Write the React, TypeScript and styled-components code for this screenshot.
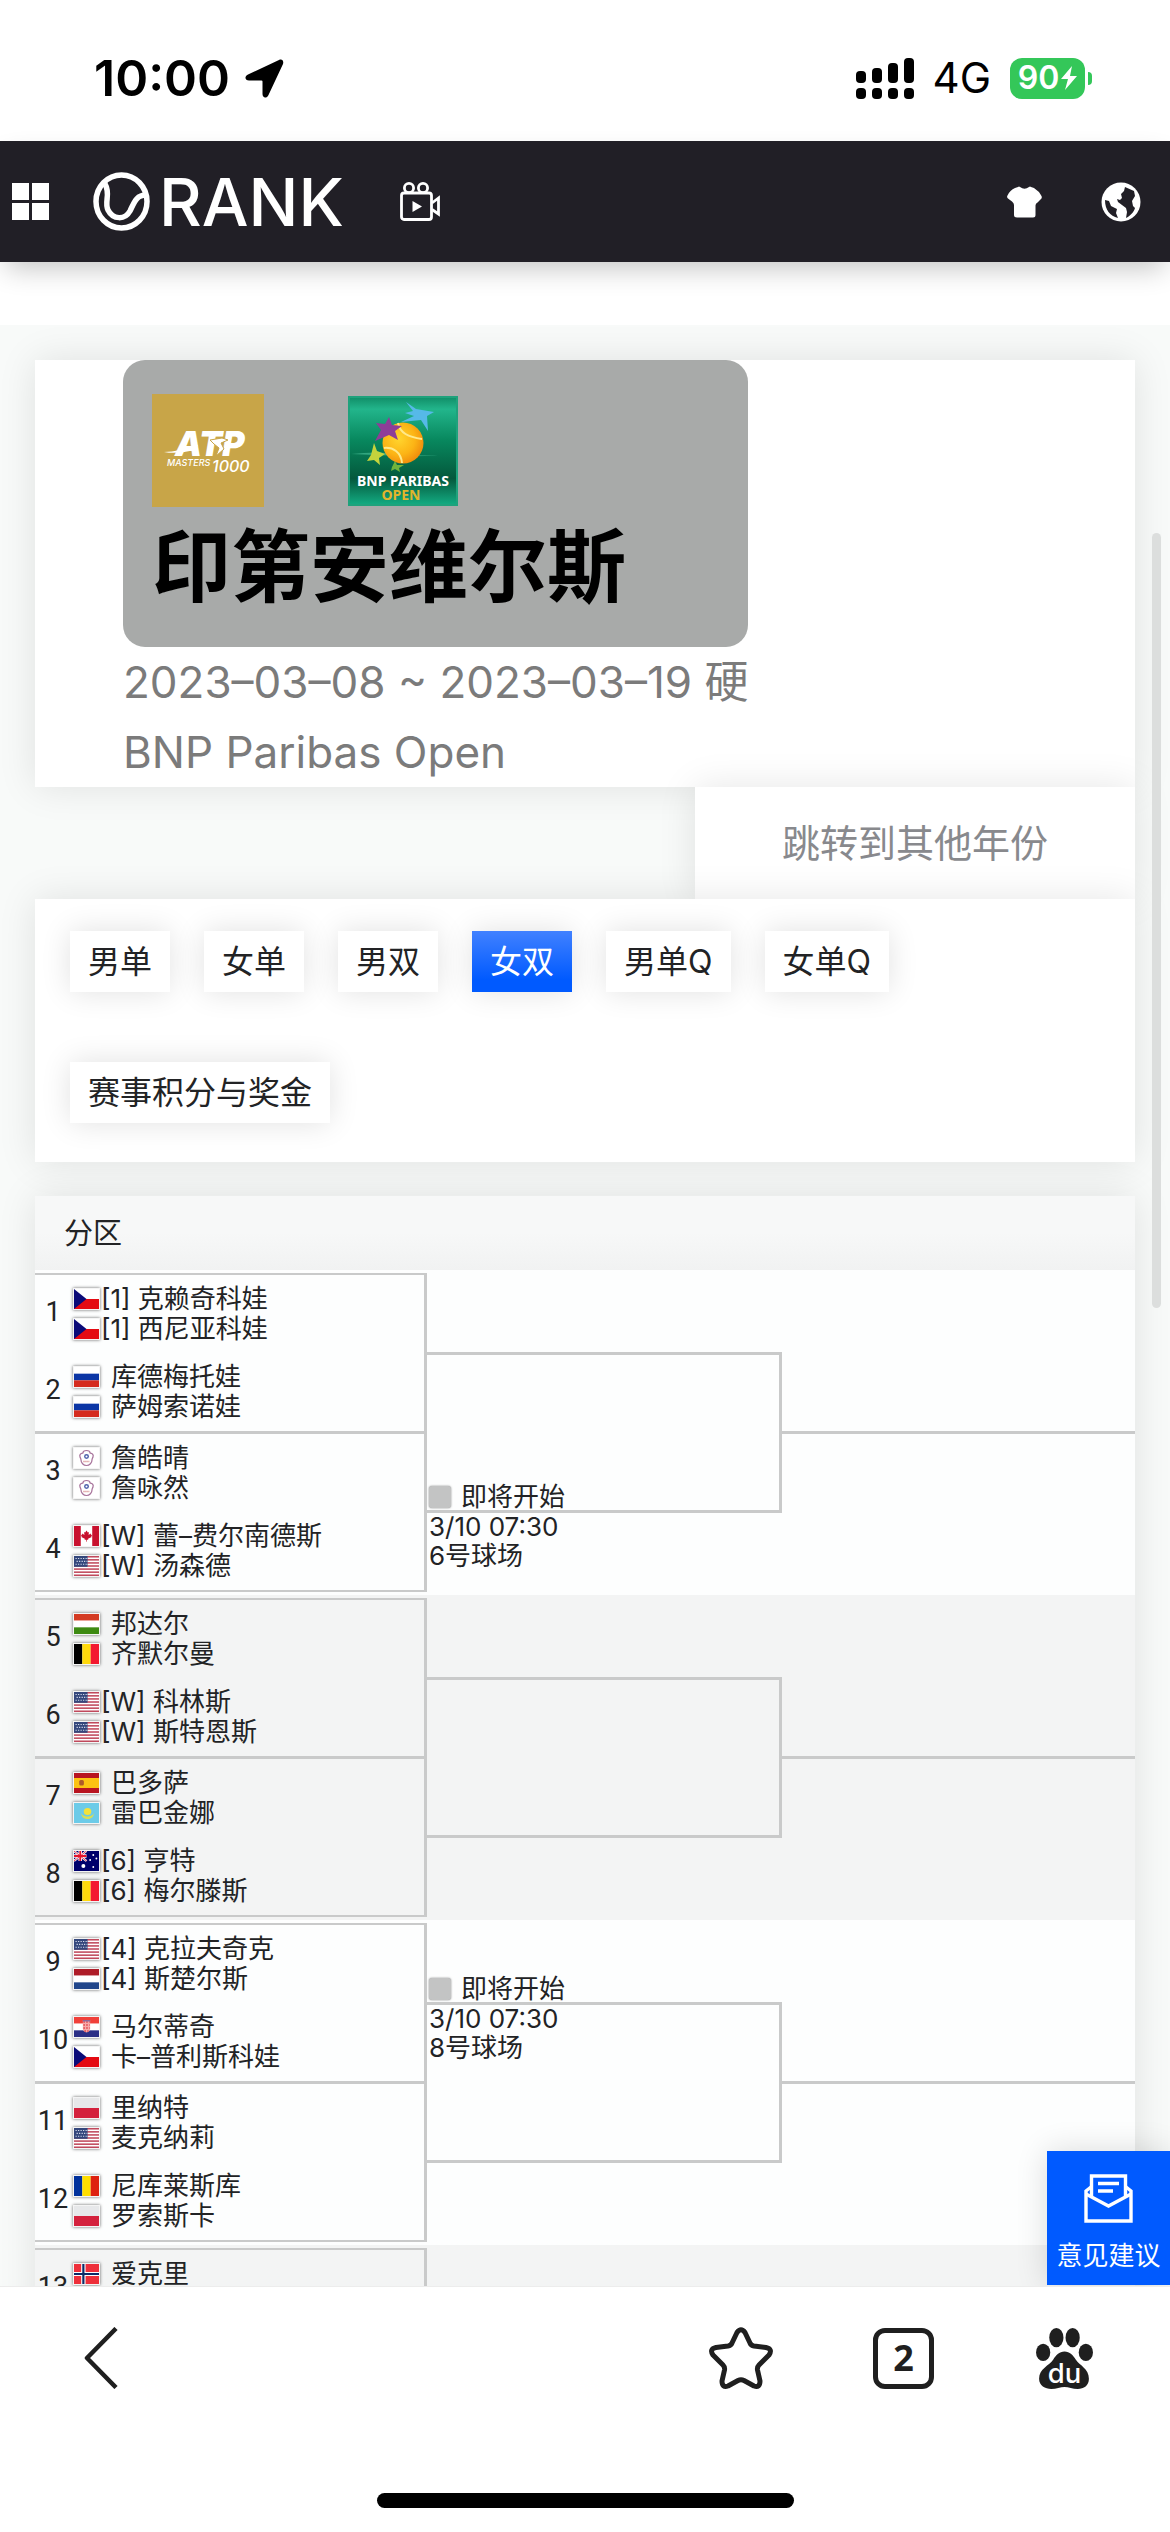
import React from "react";
import styled, { createGlobalStyle } from "styled-components";

const LINE = "#c9caca";
const BLUE = "#005aff";

const GlobalStyle = createGlobalStyle`
  * { box-sizing: border-box; }
  body {
    margin: 0;
    background: #fff;
    color: #222325;
    font-family: Inter, "Noto Sans CJK SC", sans-serif;
  }
  button {
    margin: 0;
    padding: 0;
    border: 0;
    background: none;
    color: inherit;
    font: inherit;
    cursor: pointer;
  }
  svg { display: block; flex: none; }
`;

const Screen = styled.div`
  height: 100vh;
  display: flex;
  flex-direction: column;
  overflow: hidden;
`;

const StatusBar = styled.div`
  flex: none;
  height: 141px;
  padding: 15px 78px 0 94px;
  display: flex;
  align-items: center;
  justify-content: space-between;
  color: #000;
`;

const StatusSide = styled.div<{ $gap: number }>`
  display: flex;
  align-items: center;
  gap: ${(p) => p.$gap}px;
`;

const Clock = styled.span`
  font-size: 50px;
  line-height: 60px;
  font-weight: 600;
`;

const Network = styled.span`
  font-size: 42px;
  line-height: 50px;
`;

const BatteryWrap = styled.div`
  display: flex;
  align-items: center;
  gap: 3px;
`;

const BatteryBody = styled.div`
  width: 75px;
  height: 41px;
  display: flex;
  align-items: center;
  justify-content: center;
  gap: 2px;
  border-radius: 12px;
  background: #34c759;
  color: #fff;
  font-size: 32px;
  line-height: 40px;
  font-weight: 600;
`;

const BatteryNub = styled.span`
  width: 4px;
  height: 13px;
  border-radius: 0 6px 6px 0;
  background: #34c759;
`;

const SiteHeader = styled.header`
  flex: none;
  position: relative;
  z-index: 2;
  height: 121px;
  padding: 0 29px 0 12px;
  display: flex;
  align-items: center;
  background: #211f26;
  color: #fff;
  box-shadow: 0 12px 26px -6px rgba(0, 0, 0, 0.24);
`;

const Brand = styled.a`
  margin: 0 56px 0 44px;
  display: flex;
  align-items: center;
  gap: 9px;
  color: #fff;
  text-decoration: none;
  font-size: 66px;
  line-height: 62px;
  font-weight: 500;
`;

const HeaderTools = styled.div`
  margin-left: auto;
  display: flex;
  align-items: center;
  gap: 59px;
`;

const Viewport = styled.div`
  flex: 1;
  min-height: 0;
  position: relative;
  overflow: hidden;
  background: #f8faf9;
`;

const Spacer = styled.div`
  height: 63px;
  background: #fff;
`;

const Page = styled.main`
  padding: 35px 35px 0;
`;

const Card = styled.section`
  background: #fff;
  box-shadow: 0 0 36px rgba(0, 0, 0, 0.1);
`;

const EventCard = styled(Card)`
  padding-left: 88px;
`;

const EventInfo = styled.div`
  width: fit-content;
  color: #7b7b7b;
  font-size: 44px;
  line-height: 70px;

  p { margin: 0; }
`;

const EventBanner = styled.div`
  padding: 34px 29px 19px;
  border-radius: 22px;
  background: #a8aaa9;

  h1 {
    margin: 0;
    color: #000;
    font-size: 79px;
    line-height: 121px;
    font-weight: 600;
  }
`;

const Logos = styled.div`
  display: flex;
  align-items: center;
  gap: 84px;
`;

const YearRow = styled.div`
  display: flex;
  justify-content: flex-end;
`;

const YearPicker = styled.button`
  width: 40%;
  height: 112px;
  background: #fff;
  box-shadow: 0 0 36px rgba(0, 0, 0, 0.1);
  color: #88898d;
  font-size: 38px;
  line-height: 56px;
`;

const TabsCard = styled(Card)`
  position: relative;
  padding: 32px 35px 39px;
  display: flex;
  flex-wrap: wrap;
  gap: 70px 34px;
`;

const Tab = styled.button<{ $active?: boolean }>`
  height: 61px;
  padding: 0 18px;
  background: ${(p) => (p.$active ? `linear-gradient(#4181ff, ${BLUE} 80%)` : "#fff")};
  color: ${(p) => (p.$active ? "#fff" : "#222325")};
  box-shadow: 0 0 30px rgba(0, 20, 20, 0.12);
  font-size: 32px;
  line-height: 58px;
`;

const DrawCard = styled(Card)`
  margin-top: 34px;
`;

const DrawTitle = styled.h2`
  margin: 0;
  height: 74px;
  padding: 0 29px;
  background: linear-gradient(#f7f8f8 50%, #f1f2f2);
  font-size: 29px;
  line-height: 76px;
  font-weight: 400;
`;

const Group = styled.div<{ $shaded: boolean }>`
  min-height: 325px;
  padding: 3px 0;
  display: grid;
  grid-template-columns: 392px 355px 1fr;
  background: ${(p) => (p.$shaded ? "#f3f4f4" : "#fdfefe")};
`;

const FirstRound = styled.div`
  border: solid ${LINE};
  border-width: 2px 3px 2px 0;
`;

const Match = styled.div`
  & + & { border-top: 3px solid ${LINE}; }
`;

const Entry = styled.div`
  height: 78px;
  display: flex;
`;

const DrawNo = styled.span`
  width: 36px;
  text-align: center;
  font-family: Roboto, sans-serif;
  font-size: 27px;
  line-height: 74px;
`;

const Team = styled.div`
  padding: 9px 0 0 2px;
`;

const Player = styled.div<{ $seeded: boolean }>`
  height: 30px;
  display: flex;
  align-items: center;
  gap: ${(p) => (p.$seeded ? 1 : 11)}px;
  font-size: 26px;
  line-height: 30px;
  white-space: pre;
`;

const SecondRound = styled.div`
  position: relative;
  align-self: center;
  height: 161px;
  border: solid ${LINE};
  border-width: 3px 3px 3px 0;
`;

const Schedule = styled.div<{ $line: "top" | "bottom" }>`
  position: absolute;
  left: 2px;
  ${(p) => (p.$line === "top" ? "top: -32px;" : "top: 126px;")}
  font-size: 26px;
  line-height: 29px;

  div:first-child {
    height: 31px;
    display: flex;
    align-items: center;
    gap: 10px;
  }
`;

const StateMark = styled.span`
  width: 22px;
  height: 22px;
  border-radius: 3px;
  background: #c3c4c4;
  box-shadow: 0 0 2px rgba(0, 0, 0, 0.5);
`;

const ThirdRound = styled.div`
  align-self: center;
  height: 3px;
  background: ${LINE};
`;

const ScrollThumb = styled.div`
  position: absolute;
  z-index: 3;
  right: 9px;
  top: 271px;
  width: 9px;
  height: 775px;
  border-radius: 5px;
  background: #dcdedd;
`;

const Feedback = styled.button`
  position: absolute;
  right: 0;
  bottom: 1px;
  width: 123px;
  height: 134px;
  padding-top: 23px;
  display: flex;
  flex-direction: column;
  align-items: center;
  gap: 14px;
  background: ${BLUE};
  box-shadow: 0 0 30px rgba(0, 0, 0, 0.14);
  color: #fff;
  font-size: 26px;
  line-height: 38px;
`;

const BottomArea = styled.footer`
  flex: none;
  height: 246px;
  padding: 0 75px 24px 84px;
  display: flex;
  flex-direction: column;
  justify-content: space-between;
  align-items: stretch;
  border-top: 1px solid #ececec;
  background: #fff;
  color: #1f1f1f;
`;

const BrowserBar = styled.nav`
  padding-top: 40px;
  display: flex;
  align-items: center;
  justify-content: space-between;
`;

const BrowserTools = styled.div`
  display: flex;
  align-items: center;
  gap: 100px;
`;

const TabCount = styled.button`
  && {
    width: 61px;
    height: 61px;
    border: 5px solid #1f1f1f;
    border-radius: 12px;
    font-family: "Noto Sans", sans-serif;
    font-size: 36px;
    line-height: 48px;
    font-weight: 700;
  }
`;

const HomeIndicator = styled.div`
  align-self: center;
  width: 417px;
  height: 15px;
  margin-right: 9px;
  border-radius: 8px;
  background: #000;
`;

type Code =
  | "CZE" | "RUS" | "TPE" | "CAN" | "USA" | "HUN" | "BEL" | "ESP"
  | "KAZ" | "AUS" | "NED" | "CRO" | "POL" | "ROU" | "NOR";

const bands = (colors: string[], vertical = false) => (
  <>
    {colors.map((c, i) =>
      vertical ? (
        <rect key={i} x={i * 8} width="8" height="20" fill={c} />
      ) : (
        <rect key={i} y={(i * 20) / colors.length} width="24" height={20 / colors.length} fill={c} />
      )
    )}
  </>
);

const flagArt: Record<Code, React.ReactNode> = {
  CZE: (
    <>
      {bands(["#fff", "#e40a12"])}
      <path d="M0 0L12 10L0 20z" fill="#0b0b78" />
    </>
  ),
  RUS: bands(["#fff", "#0b35a5", "#d52b1e"]),
  TPE: (
    <>
      <rect width="24" height="20" fill="#fff" />
      <path
        d="M12 2.500c2.400 0 3.400 1.200 3.600 2.700c2.200.2 3.400 1.800 2.600 3.800c-.4 1.400-.9 1.600-.9 2.800c0 3-2.300 5.700-5.300 5.700s-5.300-2.700-5.300-5.700c0-1.200-.5-1.400-.9-2.800c-.8-2 .4-3.600 2.600-3.800C8.600 3.700 9.600 2.500 12 2.500z"
        fill="none"
        stroke="#a8739b"
        strokeWidth="1.200"
      />
      <circle cx="12" cy="8.500" r="2.400" fill="#4f62ac" />
      <circle cx="12" cy="8.500" r="1" fill="#fff" />
      <path d="M9 13.500h6" stroke="#d98c8c" strokeWidth="1.500" strokeDasharray="1.200 .7" />
    </>
  ),
  CAN: (
    <>
      <rect width="24" height="20" fill="#fff" />
      <path d="M0 0h6.500v20H0zM17.500 0H24v20h-6.500z" fill="#c8102e" />
      <path d="M12 4.500l1.300 2 1-.4-.3 3 2-1.500.3 1.200 1.200.2-1 1.200.5.800-3.500 1.700.2 1h-1.400l-.1 2h-.5l-.1-2h-1.400l.2-1L7 11l.5-.8-1-1.200 1.200-.2.300-1.200 2 1.500-.3-3 1 .4z" fill="#c8102e" />
    </>
  ),
  USA: (
    <>
      <rect width="24" height="20" fill="#fff" />
      {[0, 1, 2, 3, 4, 5, 6].map((i) => (
        <rect key={i} y={i * 3.08} width="24" height="1.540" fill="#c0495c" />
      ))}
      <rect width="13" height="10.800" fill="#34477c" />
      <path d="M1.500 2.500h11M2.500 5.400h10M1.500 8.300h11" stroke="#dfe4f2" strokeWidth="1.100" strokeDasharray="1.100 1.300" />
    </>
  ),
  HUN: bands(["#d43a22", "#fff", "#3d8a12"]),
  BEL: bands(["#000", "#ffd90c", "#f31830"], true),
  ESP: (
    <>
      <rect width="24" height="20" fill="#b81420" />
      <rect y="5" width="24" height="10" fill="#fcc212" />
      <rect x="5" y="7" width="4.500" height="5.500" rx="1.500" fill="#ad5a2a" />
    </>
  ),
  KAZ: (
    <>
      <rect width="24" height="20" fill="#6ccbe8" />
      <circle cx="13" cy="8.500" r="3.600" fill="#f4e23a" />
      <path d="M6.500 10c2 4.500 11 4.500 13 0c-1 4.500-3.500 6-6.500 6s-5.500-1.500-6.500-6z" fill="#d9de55" />
    </>
  ),
  AUS: (
    <>
      <rect width="24" height="20" fill="#00006b" />
      <path d="M0 0l12 10M12 0L0 10" stroke="#fff" strokeWidth="2.200" />
      <path d="M6 0v10M0 5h12" stroke="#fff" strokeWidth="3.400" />
      <path d="M6 0v10M0 5h12" stroke="#e4142c" strokeWidth="1.800" />
      <path d="M0 0l12 10M12 0L0 10" stroke="#e4142c" strokeWidth=".8" />
      <circle cx="9" cy="15" r="1.900" fill="#fff" />
      <g fill="#fff">
        <circle cx="18.500" cy="4" r=".9" />
        <circle cx="15.500" cy="9" r=".9" />
        <circle cx="21.500" cy="7.500" r=".9" />
        <circle cx="18.500" cy="16" r=".9" />
      </g>
    </>
  ),
  NED: bands(["#ae1c28", "#fff", "#21468b"]),
  CRO: (
    <>
      {bands(["#f0403a", "#fff", "#2b2f86"])}
      <path d="M8.500 3h7v9c0 2-1.500 3-3.500 3.500c-2-.5-3.500-1.500-3.500-3.500z" fill="#f7a9a9" />
      <path d="M9 5h6M9 8h6M9 11h6M10 14h4" stroke="#e0474c" strokeWidth="1.500" strokeDasharray="1.500 1.200" />
      <path d="M8.500 3h7v1.500h-7z" fill="#8a6a9c" />
    </>
  ),
  POL: bands(["#e7e8ea", "#d4213d"]),
  ROU: bands(["#00319c", "#ffde00", "#de2110"], true),
  NOR: (
    <>
      <rect width="24" height="20" fill="#ee2f3a" />
      <path d="M9 0v20M0 10h24" stroke="#fff" strokeWidth="4.200" />
      <path d="M9 0v20M0 10h24" stroke="#0b2b68" strokeWidth="2.100" />
    </>
  ),
};

const FlagFrame = styled.svg`
  width: 27px;
  height: 22px;
  border: 1px solid #f4f4f4;
  background: #fff;
  box-shadow: 0 0 3px rgba(0, 0, 0, 0.6);
`;

const Flag = ({ code }: { code: Code }) => (
  <FlagFrame viewBox="0 0 24 20" preserveAspectRatio="none" role="img" aria-label={code}>
    {flagArt[code]}
  </FlagFrame>
);

type PlayerData = { flag: Code; name: string; seed?: string };
type EntryData = { no: number; players: PlayerData[] };
type GroupData = {
  matches: EntryData[][];
  schedule?: { line: "top" | "bottom"; court: string };
};

const p = (flag: Code, name: string, seed?: string): PlayerData => ({ flag, name, seed });

const groups: GroupData[] = [
  {
    matches: [
      [
        { no: 1, players: [p("CZE", "克赖奇科娃", "1"), p("CZE", "西尼亚科娃", "1")] },
        { no: 2, players: [p("RUS", "库德梅托娃"), p("RUS", "萨姆索诺娃")] },
      ],
      [
        { no: 3, players: [p("TPE", "詹皓晴"), p("TPE", "詹咏然")] },
        { no: 4, players: [p("CAN", "蕾–费尔南德斯", "W"), p("USA", "汤森德", "W")] },
      ],
    ],
    schedule: { line: "bottom", court: "6号球场" },
  },
  {
    matches: [
      [
        { no: 5, players: [p("HUN", "邦达尔"), p("BEL", "齐默尔曼")] },
        { no: 6, players: [p("USA", "科林斯", "W"), p("USA", "斯特恩斯", "W")] },
      ],
      [
        { no: 7, players: [p("ESP", "巴多萨"), p("KAZ", "雷巴金娜")] },
        { no: 8, players: [p("AUS", "亨特", "6"), p("BEL", "梅尔滕斯", "6")] },
      ],
    ],
  },
  {
    matches: [
      [
        { no: 9, players: [p("USA", "克拉夫奇克", "4"), p("NED", "斯楚尔斯", "4")] },
        { no: 10, players: [p("CRO", "马尔蒂奇"), p("CZE", "卡–普利斯科娃")] },
      ],
      [
        { no: 11, players: [p("POL", "里纳特"), p("USA", "麦克纳莉")] },
        { no: 12, players: [p("ROU", "尼库莱斯库"), p("POL", "罗索斯卡")] },
      ],
    ],
    schedule: { line: "top", court: "8号球场" },
  },
  { matches: [[{ no: 13, players: [p("NOR", "爱克里")] }]] },
];

const tabs = ["男单", "女单", "男双", "女双", "男单Q", "女单Q", "赛事积分与奖金"];

const AtpLogo = () => (
  <svg width="112" height="113" viewBox="0 0 112 113" role="img" aria-label="ATP Masters 1000">
    <rect width="112" height="113" fill="#c8a548" />
    <g fill="#fff" fontFamily="Inter, sans-serif" fontStyle="italic">
      <text x="23" y="62" fontSize="34" fontWeight="900">ATP</text>
      <text x="15" y="72" fontSize="9" fontWeight="500">MASTERS</text>
      <text x="60" y="78" fontSize="16" fontWeight="500">1000</text>
    </g>
    <path d="M12 58c10 0 22-3 34-7l-3 5c-10 2-20 4-31 2z" fill="#fff" />
    <path d="M58 46l12-2 6 2-7 3 3 6-8 7 3-8-5-4z" fill="#fff" stroke="#c8a548" strokeWidth="1" />
  </svg>
);

const BnpLogo = () => (
  <svg width="110" height="110" viewBox="0 0 110 110" role="img" aria-label="BNP Paribas Open">
    <defs>
      <linearGradient id="bnpField" x1="0" y1="0" x2="0" y2="1">
        <stop offset="0" stopColor="#0f8a64" />
        <stop offset=".12" stopColor="#22b58b" />
        <stop offset=".4" stopColor="#08885e" />
        <stop offset=".75" stopColor="#04583c" />
        <stop offset="1" stopColor="#14b086" />
      </linearGradient>
      <radialGradient id="bnpBall" cx=".4" cy=".4" r=".65">
        <stop offset="0" stopColor="#ffd52e" />
        <stop offset=".6" stopColor="#fcb415" />
        <stop offset="1" stopColor="#ef8a0c" />
      </radialGradient>
    </defs>
    <rect width="110" height="110" fill="url(#bnpField)" />
    <rect x="1" y="1" width="108" height="108" fill="none" stroke="#1fa27c" strokeWidth="2" />
    <path d="M3 58q25-3 50 0t54 0q-27 3-54 2T3 58z" fill="#4fc79f" opacity=".6" />
    <circle cx="55" cy="47" r="20.500" fill="url(#bnpBall)" />
    <path d="M50 27c2 10 10 14 24 16M36 52c9-1 17 4 18 15" fill="none" stroke="#ffe98a" strokeWidth="2" />
    <path d="M58 6l10 7 18 3-7 4 1 15-7-11-20 2 13-6-9-3 8-2z" fill="#56b9e8" />
    <path d="M41 21l3 8 10 1-7 5 3 9-9-5-14 6 6-11-5-7 9 1z" fill="#8e3d98" />
    <path d="M26 47l3 8 8 3-6 4 1 7-6-5-7 1 4-6z" fill="#c5d33c" />
    <path d="M47 65l2 4 7 0-5 3 1 4-5-3-4 2 1-4z" fill="#6fb53c" />
    <g fontFamily="'Noto Sans', sans-serif" fontWeight="700" textAnchor="middle">
      <text x="55" y="90" fontSize="14" fill="#fff">BNP PARIBAS</text>
      <text x="53" y="104" fontSize="14" fill="#e2b52c">OPEN</text>
    </g>
  </svg>
);

export default function App() {
  return (
    <Screen>
      <GlobalStyle />
      <StatusBar>
        <StatusSide $gap={15}>
          <Clock>10:00</Clock>
          <svg width="39" height="39" viewBox="0 0 39 39" aria-hidden="true">
            <path d="M34 1L3 15.500c-4 2-3 6 1 6h12.500q1 0 1 1V35c0 4 4 5 6 1L38 5c1-3-1-5.500-4-4z" fill="#000" />
          </svg>
        </StatusSide>
        <StatusSide $gap={19}>
          <svg width="58" height="41" viewBox="0 0 58 41" aria-hidden="true">
            <rect y="13" width="10" height="12" rx="4" />
            <rect x="16" y="10" width="10" height="15" rx="4" />
            <rect x="32" y="5" width="10" height="20" rx="4" />
            <rect x="48" y="0" width="10" height="25" rx="4" />
            <rect y="30" width="10" height="11" rx="4" />
            <rect x="16" y="30" width="10" height="11" rx="4" />
            <rect x="32" y="30" width="10" height="11" rx="4" />
            <rect x="48" y="30" width="10" height="11" rx="4" />
          </svg>
          <Network>4G</Network>
          <BatteryWrap>
            <BatteryBody>
              90
              <svg width="16" height="24" viewBox="0 0 16 24" aria-hidden="true">
                <path d="M11 0L0 13h7L4 24 16 10H9z" fill="#fff" />
              </svg>
            </BatteryBody>
            <BatteryNub />
          </BatteryWrap>
        </StatusSide>
      </StatusBar>

      <SiteHeader>
        <button aria-label="菜单">
          <svg width="37" height="37" viewBox="0 0 37 37" fill="#fff">
            <path d="M0 0h17v17H0zM20 0h17v17H20zM0 20h17v17H0zM20 20h17v17H20z" />
          </svg>
        </button>
        <Brand href="#">
          <svg width="57" height="59" viewBox="0 0 57 59" fill="none" stroke="#fff" aria-hidden="true">
            <ellipse cx="28.500" cy="29.500" rx="25.500" ry="26.500" strokeWidth="5.500" />
            <path d="M12 12C18 22 11 30 15 38c5 10 17 10 22 1c4-8 6-16 16-16" strokeWidth="5.500" />
          </svg>
          RANK
        </Brand>
        <button aria-label="视频">
          <svg width="40" height="39" viewBox="0 0 40 39" fill="none" stroke="#fff" strokeWidth="2.800">
            <circle cx="9" cy="6" r="4.600" />
            <circle cx="23" cy="6" r="4.600" />
            <rect x="1.500" y="11" width="30" height="26.500" rx="2.500" />
            <path d="M32 21l6.500-5v16L32 27.500" />
            <path d="M12.500 19l9.500 5.500-9.500 5.500z" fill="#fff" stroke="none" />
          </svg>
        </button>
        <HeaderTools>
          <button aria-label="主题">
            <svg width="35" height="32" viewBox="0 0 35 32" fill="#fff">
              <path d="M11 1q1-1 2 0q4.500 3.500 9 0q1-1 2 0l3 1q5 3 7.500 8q1 2-1 3.500l-3 3q-2 1-2 3V29q0 2.500-2.500 2.500H10Q7 31.500 7 29V19q0-2-2-3.500l-4-3q-1.500-1.500-.5-3Q3 4 8 2z" />
            </svg>
          </button>
          <button aria-label="语言">
            <svg width="40" height="40" viewBox="0 0 40 40">
              <circle cx="20" cy="20" r="19.500" fill="#fff" />
              <path d="M4 18l4 1 2 5 6 3-1 4 2 5C9 34 4 28 4 18z" fill="#211f26" />
              <path d="M24 5l9 4 1 5-3 5 1 5 2 2c-1 4-5 8-9 10l1-6-1-4-4-3-4-3-1-3 3 1 2-2-1-4 3-3z" fill="#211f26" />
            </svg>
          </button>
        </HeaderTools>
      </SiteHeader>

      <Viewport>
        <Spacer />
        <Page>
          <EventCard>
            <EventInfo>
              <EventBanner>
                <Logos>
                  <AtpLogo />
                  <BnpLogo />
                </Logos>
                <h1>印第安维尔斯</h1>
              </EventBanner>
              <p>2023–03–08 ~ 2023–03–19 硬</p>
              <p>BNP Paribas Open</p>
            </EventInfo>
          </EventCard>
          <YearRow>
            <YearPicker>跳转到其他年份</YearPicker>
          </YearRow>
          <TabsCard>
            {tabs.map((t) => (
              <Tab key={t} $active={t === "女双"}>
                {t}
              </Tab>
            ))}
          </TabsCard>
          <DrawCard>
            <DrawTitle>分区</DrawTitle>
            {groups.map((g, i) => (
              <Group key={i} $shaded={i % 2 === 1}>
                <FirstRound>
                  {g.matches.map((m, j) => (
                    <Match key={j}>
                      {m.map((e) => (
                        <Entry key={e.no}>
                          <DrawNo>{e.no}</DrawNo>
                          <Team>
                            {e.players.map((pl) => (
                              <Player key={pl.name} $seeded={!!pl.seed}>
                                <Flag code={pl.flag} />
                                <span>{pl.seed ? `[${pl.seed}] ${pl.name}` : pl.name}</span>
                              </Player>
                            ))}
                          </Team>
                        </Entry>
                      ))}
                    </Match>
                  ))}
                </FirstRound>
                <SecondRound>
                  {g.schedule && (
                    <Schedule $line={g.schedule.line}>
                      <div>
                        <StateMark />
                        即将开始
                      </div>
                      <div>3/10 07:30</div>
                      <div>{g.schedule.court}</div>
                    </Schedule>
                  )}
                </SecondRound>
                <ThirdRound />
              </Group>
            ))}
          </DrawCard>
        </Page>
        <ScrollThumb />
        <Feedback>
          <svg width="49" height="49" viewBox="0 0 49 49" fill="none" stroke="#fff" strokeWidth="3.400" aria-hidden="true">
            <path d="M7.500 22V2h34v20" />
            <path d="M7 13L2 17v30h45V17l-5-4" />
            <path d="M2 20l22.500 12L47 20" />
            <path d="M14 9.500h21M14 17h15" />
          </svg>
          意见建议
        </Feedback>
      </Viewport>

      <BottomArea>
        <BrowserBar>
          <button aria-label="返回">
            <svg width="35" height="62" viewBox="0 0 35 62" fill="none" stroke="#1f1f1f" strokeWidth="4.500" strokeLinejoin="round">
              <path d="M32 1.500L3 31l29 29.500" />
            </svg>
          </button>
          <BrowserTools>
            <button aria-label="收藏">
              <svg width="64" height="62" viewBox="0 0 64 62" fill="none" stroke="#1f1f1f" strokeWidth="5" strokeLinejoin="round">
                <path d="M28 5.500Q32 0 36 5.500L41 16Q42 18.500 45 19L57 20.500Q64 22 60 28L50 38Q48 40 48.500 43L51 54Q51 61 45 59L35 53.500Q32 52 29 53.500L19 59Q13 61 13 54L15.500 43Q16 40 14 38L4 28Q0 22 7 20.500L19 19Q22 18.500 23 16z" />
              </svg>
            </button>
            <TabCount aria-label="标签页">2</TabCount>
            <button aria-label="百度">
              <svg width="61" height="61" viewBox="0 0 56 60" fill="#1f1f1f">
                <ellipse cx="7" cy="24" rx="7" ry="8.500" />
                <ellipse cx="20" cy="9.500" rx="7" ry="9.500" />
                <ellipse cx="36" cy="9.500" rx="7" ry="9.500" />
                <ellipse cx="49" cy="24" rx="7" ry="8.500" />
                <path d="M28 23c5 0 9 4 11 8c4 6 13 9 13 19c0 7-5 10-11 10c-5 0-9-2-13-2s-8 2-13 2C9 60 3 57 3 50c0-10 10-13 14-19c2-4 6-8 11-8z" />
                <text x="28" y="54" fontSize="27" fontWeight="500" fontFamily="Inter, sans-serif" textAnchor="middle" fill="#fff">du</text>
              </svg>
            </button>
          </BrowserTools>
        </BrowserBar>
        <HomeIndicator />
      </BottomArea>
    </Screen>
  );
}
